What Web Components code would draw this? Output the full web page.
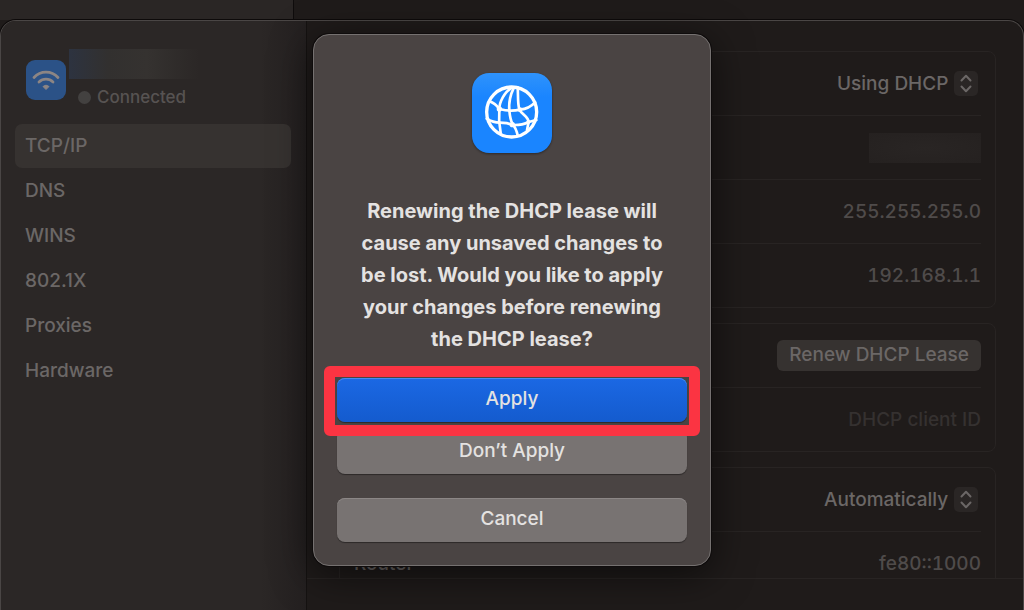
<!DOCTYPE html>
<html lang="en">
<head>
<meta charset="utf-8">
<title>Network details</title>
<style>
  html, body { margin: 0; height: 100%; }
  body {
    font-family: Inter, "Liberation Sans", sans-serif;
    font-size: 19px; line-height: 24px; font-weight: 500;
    background: #1f1b1a; color: #6b6766;
    overflow: hidden;
  }
</style>
</head>
<body>
<network-window>
  <side-panel slot="side">
    <network-header slot="header">Connected</network-header>
    <nav-item selected>TCP/IP</nav-item>
    <nav-item>DNS</nav-item>
    <nav-item>WINS</nav-item>
    <nav-item>802.1X</nav-item>
    <nav-item>Proxies</nav-item>
    <nav-item>Hardware</nav-item>
  </side-panel>
  <settings-group>
    <setting-row><pop-up label="Configure IPv4">Using DHCP</pop-up></setting-row>
    <setting-row><redacted-value></redacted-value></setting-row>
    <setting-row>255.255.255.0</setting-row>
    <setting-row>192.168.1.1</setting-row>
  </settings-group>
  <settings-group>
    <setting-row><small-button>Renew DHCP Lease</small-button></setting-row>
    <setting-row><text-entry label="DHCP client ID"></text-entry></setting-row>
  </settings-group>
  <settings-group>
    <setting-row><pop-up label="Configure IPv6">Automatically</pop-up></setting-row>
    <setting-row label="Router">fe80::1000</setting-row>
  </settings-group>
  <alert-dialog slot="alert">
    <globe-icon slot="icon"></globe-icon>
    Renewing the DHCP lease will cause any unsaved changes to be lost. Would you like to apply your changes before renewing the DHCP lease?
    <alert-button slot="actions" primary marked>Apply</alert-button>
    <alert-button slot="actions">Don’t Apply</alert-button>
    <alert-button slot="actions" apart>Cancel</alert-button>
  </alert-dialog>
</network-window>

<script>
  const define = (name, html, setup) => {
    const template = document.createElement('template');
    template.innerHTML = html;
    customElements.define(name, class extends HTMLElement {
      constructor() {
        super();
        this.attachShadow({ mode: 'open' }).append(template.content.cloneNode(true));
      }
      connectedCallback() { if (setup) setup(this, this.shadowRoot); }
    });
  };

  define('network-window', `
    <style>
      :host { display: flex; flex-direction: column; height: 100vh; position: relative; }
      .behind { display: grid; grid-template-columns: 294px 1fr; height: 20px; flex: none; }
      .behind div:first-child { background: #2a2625; border-right: 1px solid #0f0c0c; }
      .sheet {
        flex: 1; min-height: 0; box-sizing: border-box;
        display: grid; grid-template-columns: 305px 1fr;
        border: 1px solid #4a4645; border-bottom: 0; border-radius: 16px 16px 0 0;
        box-shadow: 0 0 0 1px #0d0a0a; overflow: hidden; background: #1f1b1a;
      }
      main { display: flex; flex-direction: column; min-height: 0; min-width: 0; border-left: 1px solid #151211; }
      .groups { flex: 1; min-height: 0; overflow: hidden; padding: 30px 27px 0 32px; display: flex; flex-direction: column; gap: 15px; }
      footer { flex: none; height: 31px; border-top: 1px solid #282423; }
      .overlay { position: absolute; inset: 0; display: flex; justify-content: center; align-items: flex-start; padding-top: 34px; }
    </style>
    <div class="behind"><div></div><div></div></div>
    <div class="sheet">
      <slot name="side"></slot>
      <main><div class="groups"><slot></slot></div><footer></footer></main>
    </div>
    <div class="overlay"><slot name="alert"></slot></div>`);

  define('side-panel', `
    <style>
      :host { display: block; background: linear-gradient(90deg, #2b2726 85%, #242020); padding: 28px 15px 0 14px; }
      nav { margin-top: 15px; display: grid; gap: 1px; }
    </style>
    <slot name="header"></slot>
    <nav><slot></slot></nav>`);

  define('network-header', `
    <style>
      :host { display: flex; gap: 3px; padding-left: 11px; font-size: 17px; color: #575352; }
      svg { display: block; margin-top: 11px; flex: none; }
      .name { width: 130px; height: 30px; background: linear-gradient(90deg, #2d3340, #32302f 30%, #353230 60%, #2b2726); }
      .status { display: flex; align-items: center; gap: 6px; padding: 6px 0 0 9px; }
      .status::before { content: ""; width: 13px; height: 13px; border-radius: 50%; background: #434140; }
    </style>
    <svg width="40" height="40" viewBox="0 0 40 40" aria-hidden="true">
      <rect width="40" height="40" rx="9" fill="#2b5287"/>
      <g fill="none" stroke="#8c8584" stroke-width="2.800" stroke-linecap="round">
        <path d="M8 17.500C14.500 10.400 25.500 10.400 32 17.500"/>
        <path d="M13 22C17 18.200 23 18.200 27 22"/>
      </g>
      <path d="M20 29.500L17 26.500Q20 23.800 23 26.500Z" fill="#8c8584" stroke="#8c8584" stroke-width="1" stroke-linejoin="round"/>
    </svg>
    <div><div class="name"></div><div class="status"><slot></slot></div></div>`);

  define('nav-item', `
    <style>
      :host { display: block; }
      a { display: block; padding: 10px; border-radius: 7px; color: #6b6766; text-decoration: none; }
      :host([selected]) a { background: #363230; }
    </style>
    <a href="#"><slot></slot></a>`);

  define('settings-group', `
    <style>
      :host { display: block; flex: none; border: 1px solid #282423; border-radius: 8px; padding: 0 14px; }
      ::slotted(:not(:first-child)) { border-top: 1px solid #282423; }
    </style>
    <slot></slot>`);

  define('setting-row', `
    <style>
      :host { display: flex; align-items: center; height: 63px; color: #4f4b4a; font-variant-numeric: tabular-nums; }
      span { margin-right: auto; color: #6b6766; }
    </style>
    <span></span><slot></slot>`,
    (el, root) => { root.querySelector('span').textContent = el.getAttribute('label') || ''; });

  define('pop-up', `
    <style>
      :host { display: flex; align-items: center; gap: 5px; padding-right: 3px; }
      select { appearance: none; border: 0; background: none; padding: 0; margin: 0; font: inherit; color: #6b6766; }
      svg { display: block; }
    </style>
    <select></select>
    <svg width="24" height="25" viewBox="0 0 24 25" aria-hidden="true">
      <rect width="24" height="25" rx="5" fill="#2a2625"/>
      <path d="M7.500 9.500L12 4.800L16.500 9.500M7.500 15.500L12 20.200L16.500 15.500" fill="none" stroke="#6b6766" stroke-width="2" stroke-linecap="round" stroke-linejoin="round"/>
    </svg>`,
    (el, root) => {
      const select = root.querySelector('select');
      select.setAttribute('aria-label', el.getAttribute('label'));
      select.replaceChildren(new Option(el.textContent.trim()));
    });

  define('redacted-value', `
    <style>:host { display: block; width: 112px; height: 30px; background: radial-gradient(#292524, #252120); }</style>`);

  define('small-button', `
    <style>
      button { display: block; border: 0; border-radius: 6px; background: #363230; padding: 3px 12px 4px; font: inherit; color: #6b6766; }
    </style>
    <button type="button"><slot></slot></button>`);

  define('text-entry', `
    <style>
      input { display: block; border: 0; padding: 0; background: none; font: inherit; text-align: right; width: 200px; color: #6b6766; }
      input::placeholder { color: #353130; opacity: 1; }
    </style>
    <input type="text">`,
    (el, root) => {
      const input = root.querySelector('input');
      input.placeholder = el.getAttribute('label');
      input.setAttribute('aria-label', el.getAttribute('label'));
    });

  define('globe-icon', `
    <style>
      :host { display: block; filter: drop-shadow(0 1px 1px #0006); }
      svg { display: block; }
    </style>
    <svg width="80" height="80" viewBox="40 41 240 240" aria-hidden="true">
      <defs><linearGradient id="g" x2="0" y2="1"><stop stop-color="#2f93fb"/><stop offset=".3" stop-color="#1a85ff"/></linearGradient></defs>
      <rect x="40" y="41" width="240" height="240" rx="52" fill="url(#g)"/>
      <g fill="none" stroke="#fff" stroke-width="8" stroke-linecap="round" stroke-linejoin="round">
        <circle cx="159" cy="158" r="75" stroke-width="10"/>
        <path d="M160 84C138 98 121 128 122 151C120 174 121 196 126 220"/>
        <path d="M166 84C154 108 150 130 152 153C154 176 156 184 162 195C170 204 174 214 177 228"/>
        <path d="M177 84C179 102 176 130 182 151C190 166 209 172 210 188L205 212"/>
        <path d="M92 126Q110 132 122 149Q154 158 184 151Q212 148 229 129"/>
        <path d="M84 178Q103 190 124 190Q146 190 162 197Q190 198 210 188L233 182"/>
      </g>
      <g fill="#fff"><circle cx="122" cy="149" r="8"/><circle cx="161" cy="196" r="8"/><circle cx="184" cy="151" r="7"/><circle cx="209" cy="188" r="6"/></g>
    </svg>`);

  define('alert-dialog', `
    <style>
      :host {
        display: flex; flex-direction: column; align-items: center; box-sizing: border-box;
        width: 398px; max-width: 100%; padding: 38px 23px 23px;
        background: #4a4443; border: 1px solid #757170; border-radius: 16px;
        box-shadow: 0 0 0 1px #0f0c0c, 0 8px 40px #0009;
        color: #e4e2e1;
      }
      p { margin: 42px 0 23px; font-size: 20px; font-weight: 700; line-height: 32px; text-align: center; width: 320px; }
      .actions { align-self: stretch; display: flex; flex-direction: column; gap: 8px; }
    </style>
    <slot name="icon"></slot>
    <p><slot></slot></p>
    <div class="actions"><slot name="actions"></slot></div>`,
    (el) => { el.setAttribute('role', 'alertdialog'); });

  define('alert-button', `
    <style>
      :host { display: block; position: relative; }
      :host([apart]) { margin-top: 16px; }
      button {
        display: block; width: 100%; height: 44px; border: 0; border-radius: 8px; padding: 0 0 2px;
        background: #787372; box-shadow: inset 0 1px #8c8786, 0 1px 1px #0006;
        font: inherit; color: #e4e2e1;
      }
      :host([primary]) button { background: linear-gradient(#1b68e4, #145bce); box-shadow: inset 0 1px #4a8af0, 0 1px 1px #0006; }
      .mark { display: none; }
      :host([marked]) { z-index: 1; }
      :host([marked]) .mark { display: block; position: absolute; inset: -12px -13px -14px; border: 11px solid #fb3442; border-radius: 6px; pointer-events: none; }
    </style>
    <button type="button"><slot></slot></button><div class="mark"></div>`);
</script>
</body>
</html>
